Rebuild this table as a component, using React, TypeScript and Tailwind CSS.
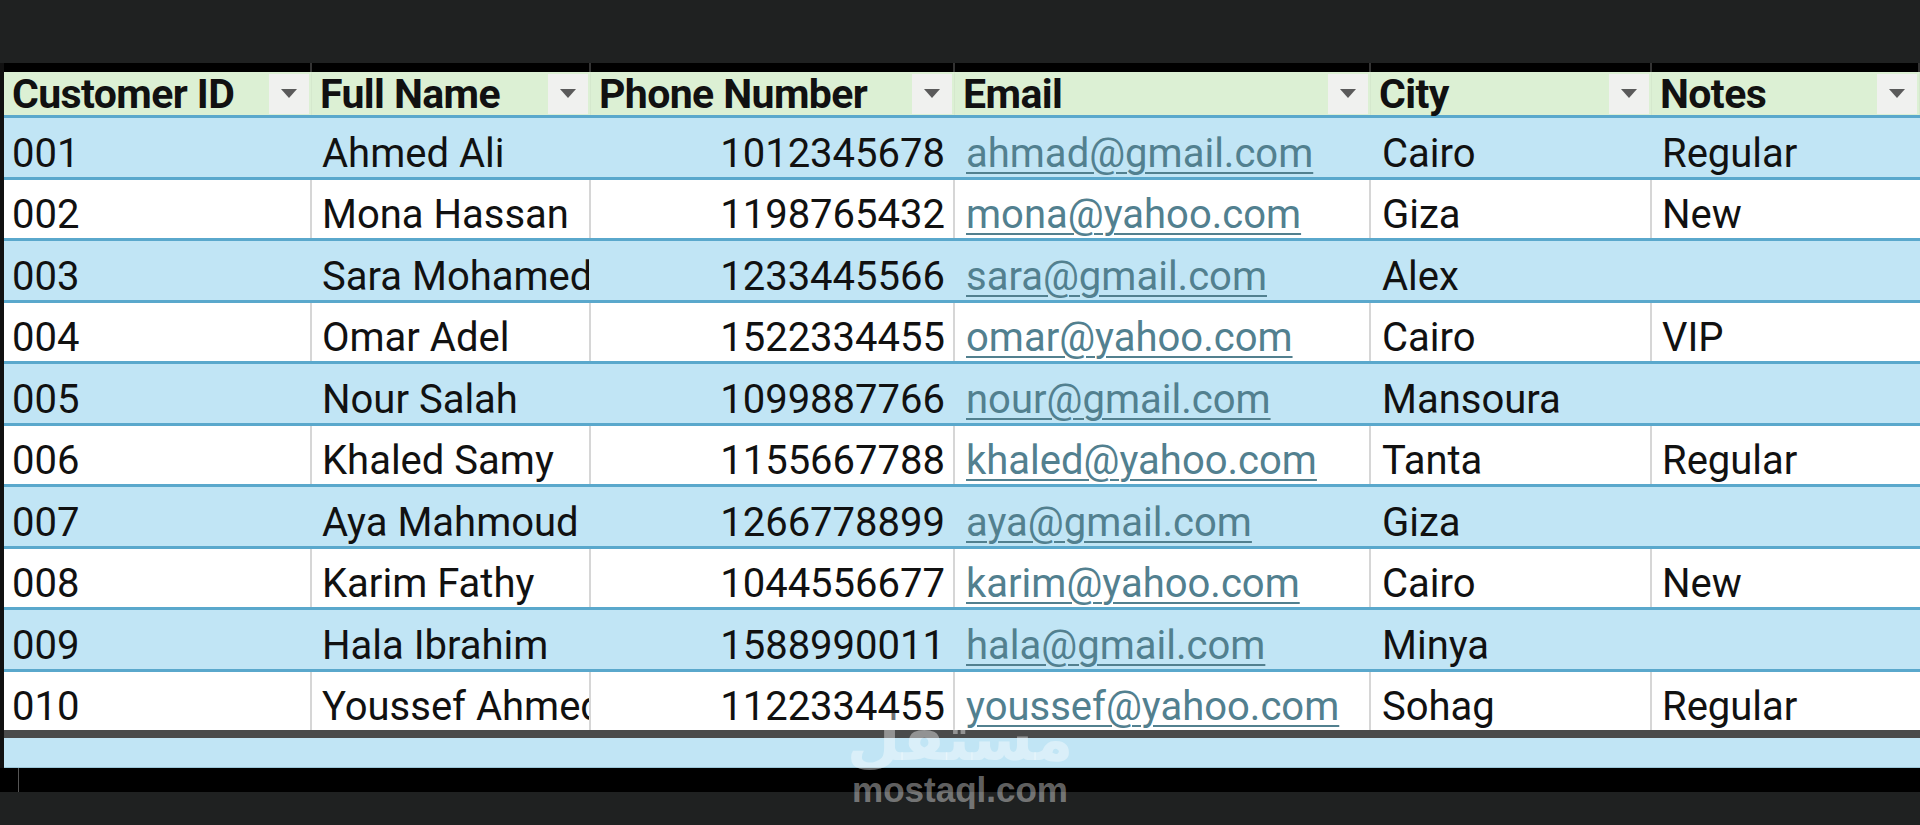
import React from 'react';

type Customer = {
  id: string;
  name: string;
  phone: string;
  email: string;
  city: string;
  notes: string;
};

const customers: Customer[] = [
  { id: '001', name: 'Ahmed Ali', phone: '1012345678', email: 'ahmad@gmail.com', city: 'Cairo', notes: 'Regular' },
  { id: '002', name: 'Mona Hassan', phone: '1198765432', email: 'mona@yahoo.com', city: 'Giza', notes: 'New' },
  { id: '003', name: 'Sara Mohamed', phone: '1233445566', email: 'sara@gmail.com', city: 'Alex', notes: '' },
  { id: '004', name: 'Omar Adel', phone: '1522334455', email: 'omar@yahoo.com', city: 'Cairo', notes: 'VIP' },
  { id: '005', name: 'Nour Salah', phone: '1099887766', email: 'nour@gmail.com', city: 'Mansoura', notes: '' },
  { id: '006', name: 'Khaled Samy', phone: '1155667788', email: 'khaled@yahoo.com', city: 'Tanta', notes: 'Regular' },
  { id: '007', name: 'Aya Mahmoud', phone: '1266778899', email: 'aya@gmail.com', city: 'Giza', notes: '' },
  { id: '008', name: 'Karim Fathy', phone: '1044556677', email: 'karim@yahoo.com', city: 'Cairo', notes: 'New' },
  { id: '009', name: 'Hala Ibrahim', phone: '1588990011', email: 'hala@gmail.com', city: 'Minya', notes: '' },
  { id: '010', name: 'Youssef Ahmed', phone: '1122334455', email: 'youssef@yahoo.com', city: 'Sohag', notes: 'Regular' },
];

// column widths in px, last one takes the rest
const columns = [
  { label: 'Customer ID', w: 'w-[308px]' },
  { label: 'Full Name', w: 'w-[279px]' },
  { label: 'Phone Number', w: 'w-[364px]' },
  { label: 'Email', w: 'w-[416px]' },
  { label: 'City', w: 'w-[281px]' },
  { label: 'Notes', w: 'flex-1' },
];

const FilterButton: React.FC = () => (
  <div className="w-[40px] h-[40px] bg-[#f0f1ef] flex items-center justify-center shrink-0">
    <svg width="16" height="9" viewBox="0 0 16 9">
      <polygon points="0,0 16,0 8,9" fill="#5a5a5a" />
    </svg>
  </div>
);

const App: React.FC = () => {
  return (
    <div
      className="relative w-[1920px] h-[825px] overflow-hidden bg-[#1f2121] flex flex-col"
      style={{ fontFamily: 'Roboto, "Noto Sans", sans-serif' }}
    >
      {/* Top dark area */}
      <div className="h-[63px] shrink-0" />

      {/* Sheet */}
      <div className="flex shrink-0">
        <div className="w-[4px] bg-[#111] shrink-0" />
        <div className="flex-1 flex flex-col">
          {/* Top black border with faint column lines */}
          <div className="h-[9px] bg-black flex">
            {columns.map((c) => (
              <div key={c.label} className={`${c.w} h-full border-r-2 border-[#333]`} />
            ))}
          </div>

          {/* Header */}
          <div className="h-[46px] flex bg-[#dcf0d4] border-b-[3px] border-[#5aa8cc]">
            {columns.map((c) => (
              <div
                key={c.label}
                className={`${c.w} h-full flex items-center justify-between pl-[8px] pr-[2px] border-r border-[#d5e8cd]`}
              >
                <span className="text-[41px] font-bold text-[#111] leading-none tracking-[-0.6px] pt-[2px]">
                  {c.label}
                </span>
                <FilterButton />
              </div>
            ))}
          </div>

          {/* Rows */}
          {customers.map((r, i) => {
            const blue = i % 2 === 0;
            const last = i === customers.length - 1;
            const rowCls = `flex text-[40px] leading-none text-[#111] ${
              blue ? 'bg-[#c1e5f5]' : 'bg-white'
            } ${last ? 'h-[58.5px]' : 'h-[61.5px] border-b-[3px] border-[#5aa8cc]'}`;
            const sep = blue ? 'border-r-2 border-[#c1e5f5]' : 'border-r-2 border-[#d6d6d6]';
            return (
              <div key={r.id} className={rowCls}>
                <div className={`w-[308px] flex items-center pl-[8px] pt-[13px] ${sep}`}>{r.id}</div>
                <div className={`w-[279px] flex items-center pl-[10px] pt-[13px] overflow-hidden whitespace-nowrap ${sep}`}>
                  {r.name}
                </div>
                <div className={`w-[364px] flex items-center justify-end pr-[8px] pt-[13px] ${sep}`}>{r.phone}</div>
                <div className={`w-[416px] flex items-center pl-[11px] pt-[13px] ${sep}`}>
                  <span className="text-[#52808f] underline decoration-[2px] underline-offset-[5px]">{r.email}</span>
                </div>
                <div className={`w-[281px] flex items-center pl-[11px] pt-[13px] ${sep}`}>{r.city}</div>
                <div className="flex-1 flex items-center pl-[10px] pt-[13px]">{r.notes}</div>
              </div>
            );
          })}

          {/* Bottom thick border + partial empty row */}
          <div className="h-[8px] bg-[#4a4b4b]" />
          <div className="h-[30px] bg-[#c1e5f5] border-b border-[#9cc6d8]" />
        </div>
      </div>

      {/* Black strip below the sheet */}
      <div className="h-[24px] bg-black shrink-0 flex">
        <div className="ml-[18px] w-[1px] h-full bg-[#555]" />
      </div>
      <div className="flex-1" />

      {/* Watermark */}
      <div className="absolute left-[845px] top-[708px] w-[230px] flex flex-col items-center pointer-events-none">
        <span
          className="text-[62px] font-bold leading-none text-white/40"
          style={{ fontFamily: '"DejaVu Sans", sans-serif' }}
          dir="rtl"
        >
          مستقل
        </span>
        <span
          className="text-[35px] font-bold leading-none text-white/40 mt-[2px]"
          style={{ fontFamily: '"Liberation Sans", Arial, sans-serif' }}
        >
          mostaql.com
        </span>
      </div>
    </div>
  );
};

export default App;
